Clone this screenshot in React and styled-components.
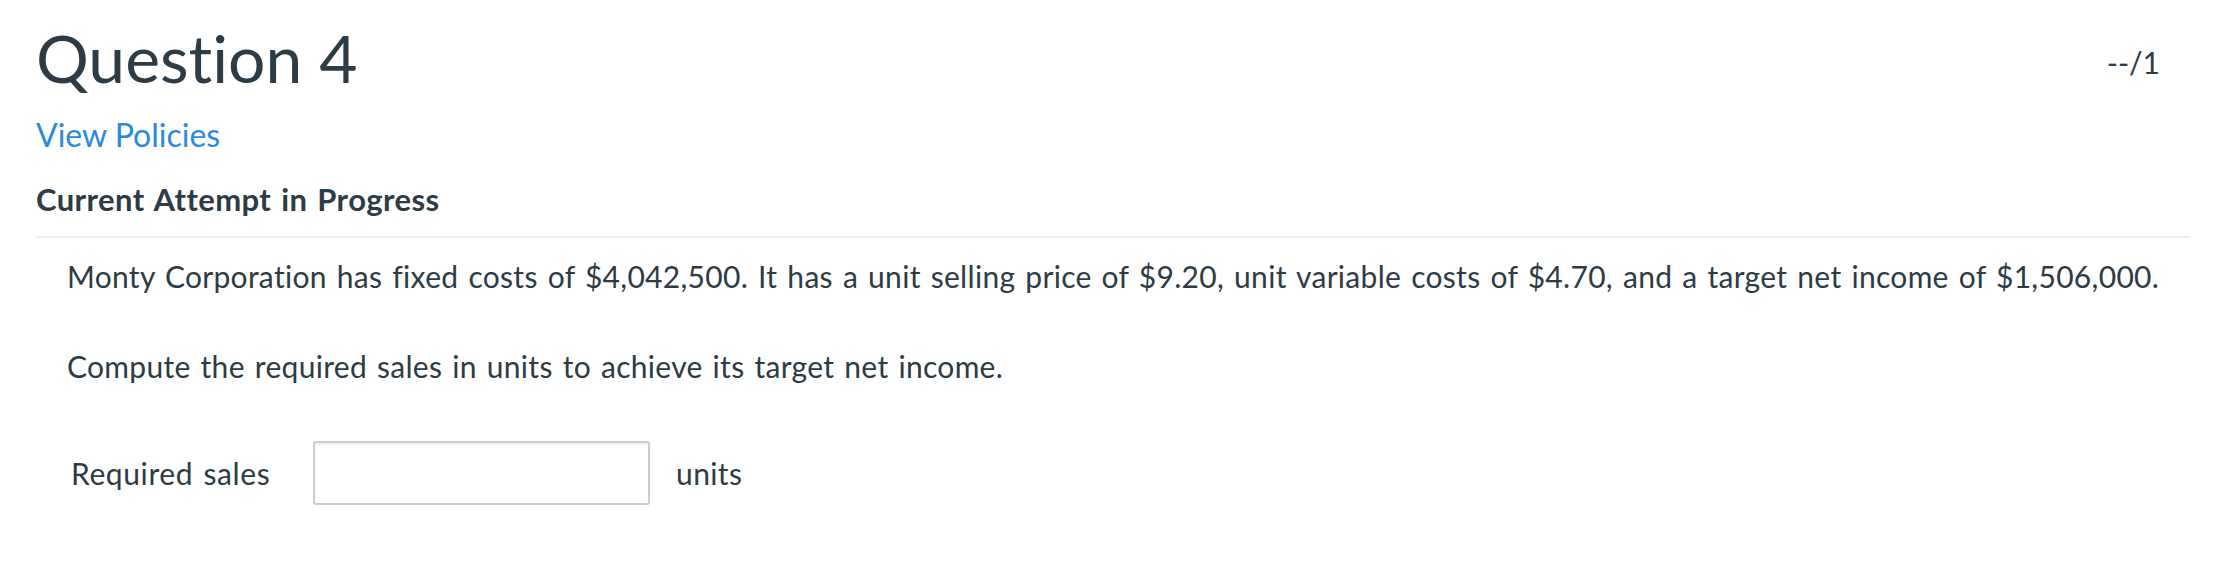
import React from "react";
import styled, { createGlobalStyle } from "styled-components";

const GlobalStyle = createGlobalStyle`
  html, body {
    margin: 0;
    padding: 0;
    background: #fff;
  }
  body {
    font-family: Lato, "Open Sans", sans-serif;
    color: #2d3b45;
    font-variant-ligatures: no-common-ligatures;
  }
`;

const Page = styled.div`
  padding: 18px 50px 0 36px;
`;

const HeaderRow = styled.div`
  display: flex;
  justify-content: space-between;
  align-items: flex-start;
`;

const Title = styled.h1`
  margin: 0;
  font-size: 66px;
  font-weight: 400;
  line-height: 1.2;
  color: #2d3b45;
`;

const Score = styled.span`
  margin: 26px 30px 0 0;
  font-size: 30px;
  line-height: 1.2;
  color: #2d3b45;
`;

const PolicyLink = styled.a`
  display: block;
  margin-top: 19px;
  font-size: 32px;
  line-height: 1.2;
  color: #2b8ae0;
  text-decoration: none;
`;

const AttemptLabel = styled.h2`
  margin: 26px 0 0;
  font-size: 31px;
  font-weight: 700;
  line-height: 1.2;
  letter-spacing: 0.4px;
  word-spacing: 2px;
  color: #2d3b45;
`;

const Divider = styled.hr`
  margin: 18px 0 0;
  border: none;
  height: 2px;
  background: #eeeeee;
`;

const QuestionBody = styled.div`
  padding: 0 0 0 31px;
`;

const Paragraph = styled.p`
  margin: ${(p) => p.top}px 0 0;
  font-size: 30px;
  line-height: 1.2;
  letter-spacing: 0.3px;
  word-spacing: 2px;
`;

const AnswerRow = styled.div`
  display: flex;
  align-items: center;
  margin-top: 57px;
  padding-left: 4px;
`;

const AnswerLabel = styled.span`
  font-size: 30px;
  line-height: 1.2;
  letter-spacing: 0.6px;
  word-spacing: 2px;
  width: 242px;
`;

const AnswerInput = styled.input`
  box-sizing: border-box;
  width: 337px;
  height: 64px;
  border: 2px solid #cccccc;
  border-radius: 3px;
  box-shadow: inset 0 2px 2px rgba(0, 0, 0, 0.06);
  outline: none;
  font-family: inherit;
  font-size: 30px;
  padding: 0 12px;
`;

const Unit = styled.span`
  font-size: 30px;
  line-height: 1.2;
  letter-spacing: 0.4px;
  margin-left: 26px;
`;

export default function App() {
  return (
    <>
      <GlobalStyle />
      <Page>
        <HeaderRow>
          <Title>Question 4</Title>
          <Score>--/1</Score>
        </HeaderRow>
        <PolicyLink href="#">View Policies</PolicyLink>
        <AttemptLabel>Current Attempt in Progress</AttemptLabel>
        <Divider />
        <QuestionBody>
          <Paragraph top={20}>
            Monty Corporation has fixed costs of $4,042,500. It has a unit selling price of $9.20, unit variable costs of $4.70, and a target net income of $1,506,000.
          </Paragraph>
          <Paragraph top={54}>
            Compute the required sales in units to achieve its target net income.
          </Paragraph>
          <AnswerRow>
            <AnswerLabel>Required sales</AnswerLabel>
            <AnswerInput type="text" />
            <Unit>units</Unit>
          </AnswerRow>
        </QuestionBody>
      </Page>
    </>
  );
}
